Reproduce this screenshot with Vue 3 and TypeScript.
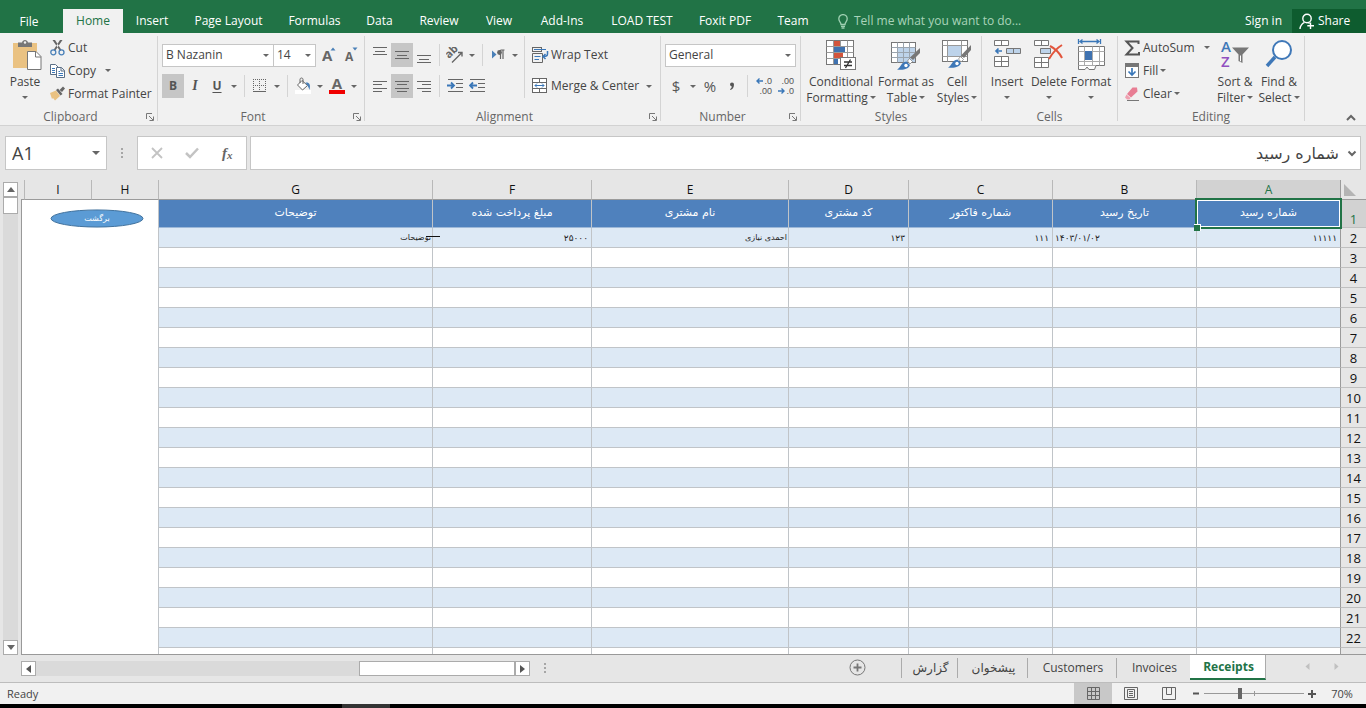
<script setup lang="ts">
import { ref } from 'vue'

interface RibbonTab { name: string; width: number }
interface Column { letter: string; title: string; value: string; align: string; cls: string }

const ribbonTabs: RibbonTab[] = [
  { name: 'Home', width: 60 },
  { name: 'Insert', width: 58 },
  { name: 'Page Layout', width: 95 },
  { name: 'Formulas', width: 77 },
  { name: 'Data', width: 53 },
  { name: 'Review', width: 66 },
  { name: 'View', width: 54 },
  { name: 'Add-Ins', width: 72 },
  { name: 'LOAD TEST', width: 88 },
  { name: 'Foxit PDF', width: 78 },
  { name: 'Team', width: 58 },
]
const activeTab = ref('Home')

const columns: Column[] = [
  { letter: 'A', title: 'شماره رسید', value: '۱۱۱۱۱', align: 'end', cls: 'w-b' },
  { letter: 'B', title: 'تاریخ رسید', value: '۱۴۰۳/۰۱/۰۲', align: 'start', cls: 'w-b' },
  { letter: 'C', title: 'شماره فاکتور', value: '۱۱۱', align: 'end', cls: 'w-b' },
  { letter: 'D', title: 'کد مشتری', value: '۱۲۳', align: 'end', cls: 'w-d' },
  { letter: 'E', title: 'نام مشتری', value: 'احمدی نیازی', align: 'flush', cls: 'w-e' },
  { letter: 'F', title: 'مبلغ پرداخت شده', value: '۲۵۰۰۰', align: 'end', cls: 'w-f' },
  { letter: 'G', title: 'توضیحات', value: 'توضیحات', align: 'flush', cls: 'w-g' },
]
const lastNumbered = 22
const emptyRows = Array.from({ length: 21 }, (_, i) => i + 3)

const sheets = ['گزارش', 'پیشخوان', 'Customers', 'Invoices', 'Receipts']
const sheetWidths = [56, 70, 89, 74, 76]
const activeSheet = ref('Receipts')

const fontName = ref('B Nazanin')
const fontSize = ref('14')
const numberFormat = ref('General')
const nameBox = ref('A1')
const formula = ref('شماره رسید')
const zoom = ref(35)
</script>

<template>
  <div class="app">
    <header class="tabs">
      <button class="tab file">File</button>
      <button
        v-for="t in ribbonTabs"
        :key="t.name"
        class="tab"
        :class="{ active: t.name === activeTab }"
        :style="{ width: t.width + 'px' }"
        @click="activeTab = t.name"
      >{{ t.name }}</button>
      <button class="tell">
        <svg width="10" height="15" viewBox="0 0 10 15" fill="none" stroke="#9fd0b2" stroke-width="1.3">
          <path d="M3 10.500C3 8 .8 7.500.8 4.800A4.200 4.200 0 0 1 9.200 4.800C9.200 7.500 7 8 7 10.500ZM3 12.300H7M3.500 14H6.500" />
        </svg>
        Tell me what you want to do...
      </button>
      <button class="signin">Sign in</button>
      <button class="share">
        <svg width="16" height="17" viewBox="0 0 16 17" fill="none" stroke="#fff" stroke-width="1.400">
          <circle cx="8" cy="5.500" r="4.200" />
          <path d="M1 16C1.300 12.500 3 10.500 5.500 9.300M9.500 9.700L10.500 10.500M11.500 9.500V16M8.300 12.800H15" />
        </svg>
        Share
      </button>
    </header>

    <section class="ribbon">
      <div class="group g-clip">
        <div class="body">
          <button class="big paste">
            <svg width="29" height="32" viewBox="0 0 29 32">
              <rect x="0" y="4" width="24" height="25" fill="#eac282" />
              <path d="M5 8V3.500H9C9.500 0 14.500 0 15 3.500H19V8Z" fill="#777" />
              <circle cx="12" cy="3.500" r="1.200" fill="#f1f1f1" />
              <path d="M14.500 12.500H23L28 17.500V30.500H14.500Z" fill="#fff" stroke="#777" />
              <path d="M22.500 12.500V18H28" fill="none" stroke="#777" />
            </svg>
            <span>Paste</span>
            <i class="caret"></i>
          </button>
          <div class="stack">
            <button class="item">
              <svg width="16" height="16" viewBox="0 0 16 16" fill="none">
                <path d="M2.500 0L5 0L11.500 10L10 11ZM12.500 0L10 0L3.500 10L5 11Z" fill="#666" />
                <circle cx="3.300" cy="12.300" r="2.500" stroke="#4a80b8" stroke-width="1.300" />
                <circle cx="11.500" cy="12.300" r="2.500" stroke="#4a80b8" stroke-width="1.300" />
              </svg>Cut
            </button>
            <button class="item">
              <svg width="16" height="16" viewBox="0 0 16 16" fill="#fff" stroke="#5b6f86">
                <path d="M.5 1.500H5.500L8.500 4.500V11.500H.5Z" /><path d="M2 5.500H5M2 7.500H5M2 9.500H5" stroke="#3a77b8" />
                <path d="M6.500 4.500H11.500L14.500 7.500V14.500H6.500ZM11 4.500V8H14.500" /><path d="M8.500 8.500H10M8.500 10.500H13M8.500 12.500H13" stroke="#3a77b8" />
              </svg>Copy<i class="caret far"></i>
            </button>
            <button class="item">
              <svg width="16" height="16" viewBox="0 0 16 16">
                <path d="M0 7L6 4.500L10 10L5 14.500L3 12L2 13Z" fill="#eac282" />
                <path d="M6 4L8 2.500L12.500 8L10.500 9.500Z" fill="#666" />
                <path d="M9.500 4L13 0.500L15 2.500L12 6Z" fill="#666" />
              </svg>Format Painter
            </button>
          </div>
        </div>
        <div class="caption">Clipboard</div>
        <button class="launch" aria-label="Clipboard settings"><svg width="8" height="8" viewBox="0 0 8 8" fill="none" stroke="#777"><path d="M.5 6V.5H6M3 3L7 7M7.500 3.500V7.500H3.500" /></svg></button>
      </div>

      <div class="group g-font">
        <div class="body rows">
          <div class="line">
            <span class="combo fname"><select v-model="fontName" aria-label="Font"><option>B Nazanin</option></select><i class="caret"></i></span>
            <span class="combo fsize"><select v-model="fontSize" aria-label="Font size"><option>14</option></select><i class="caret"></i></span>
            <button class="ic grow" aria-label="Increase font size"><svg width="15" height="18" viewBox="0 0 15 18"><text x="0" y="15" class="glyph g15">A</text><path d="M8.500 4.500L11 1.500L13.500 4.500Z" fill="#4a80b8" /></svg></button>
            <button class="ic" aria-label="Decrease font size"><svg width="15" height="18" viewBox="0 0 15 18"><text x="1" y="15" class="glyph g12">A</text><path d="M8.500 1.500H13.500L11 4.500Z" fill="#4a80b8" /></svg></button>
          </div>
          <div class="line">
            <button class="ic on"><b>B</b></button>
            <button class="ic"><b class="ital">I</b></button>
            <button class="ic"><b class="und">U</b></button>
            <button class="dd" aria-label="Underline options"><i class="caret"></i></button>
            <i class="sep"></i>
            <button class="ic" aria-label="Borders"><svg width="14" height="14" viewBox="0 0 14 14" fill="none" stroke="#666"><path d="M.5 0V13M6.500 0V13M12.500 0V13M0 .5H13M0 6.500H13" stroke-dasharray="1 1" /><path d="M0 12.500H13" /></svg></button>
            <button class="dd" aria-label="Border options"><i class="caret"></i></button>
            <i class="sep"></i>
            <button class="ic" aria-label="Fill color"><svg width="17" height="18" viewBox="0 0 17 18"><rect y="13" width="16" height="4" fill="#fff" /><path d="M7 3.500L12.500 8.500L7.500 13L2.500 8Z" fill="#fff" stroke="#666" /><path d="M5 6V2.500C5 .5 8 .5 8 2.500V7" fill="none" stroke="#666" /><path d="M10.500 5.500C14 5 16 7 14.500 13C14 11 13 10 12.500 8.500Z" fill="#4a80b8" /></svg></button>
            <button class="dd" aria-label="Fill color options"><i class="caret"></i></button>
            <button class="ic" aria-label="Font color"><svg width="16" height="18" viewBox="0 0 16 18"><text x="8" y="12" text-anchor="middle" class="glyph g15">A</text><rect y="13" width="16" height="4" fill="#f00000" /></svg></button>
            <button class="dd" aria-label="Font color options"><i class="caret"></i></button>
          </div>
        </div>
        <div class="caption">Font</div>
        <button class="launch" aria-label="Font settings"><svg width="8" height="8" viewBox="0 0 8 8" fill="none" stroke="#777"><path d="M.5 6V.5H6M3 3L7 7M7.500 3.500V7.500H3.500" /></svg></button>
      </div>

      <div class="group g-align">
        <div class="body">
          <div class="rows alignleft">
            <div class="line">
              <button class="ic" aria-label="Top align"><svg width="14" height="16" viewBox="0 0 14 16" stroke="#666"><path d="M0 .5H14M2 4.500H12M0 7.500H14" /></svg></button>
              <button class="ic on" aria-label="Middle align"><svg width="14" height="16" viewBox="0 0 14 16" stroke="#666"><path d="M0 4.500H14M2 8.500H12M0 11.500H14" /></svg></button>
              <button class="ic" aria-label="Bottom align"><svg width="14" height="16" viewBox="0 0 14 16" stroke="#666"><path d="M0 8.500H14M2 12.500H12M0 15.500H14" /></svg></button>
              <i class="sep"></i>
              <button class="ic" aria-label="Orientation"><svg width="18" height="17" viewBox="0 0 18 17" fill="none"><text x="3" y="12" transform="rotate(-45 3 12)" class="glyph g11">ab</text><path d="M6 15.500L15.500 6M12 5.500H16V9.500" stroke="#666" stroke-width="1.400" /></svg></button>
              <button class="dd" aria-label="Orientation options"><i class="caret"></i></button>
              <i class="sep"></i>
              <button class="ic" aria-label="Text direction"><svg width="14" height="12" viewBox="0 0 14 12"><path d="M1 1.500L5.500 5.500L1 9.500Z" fill="#4a80b8" /><path d="M9.500 1H13.500M9.500 1V10M12 1V10" stroke="#666" stroke-width="1.200" /><circle cx="8.500" cy="3.500" r="2.400" fill="#666" /></svg></button>
              <button class="dd" aria-label="Text direction options"><i class="caret"></i></button>
            </div>
            <div class="line">
              <button class="ic" aria-label="Align left"><svg width="14" height="13" viewBox="0 0 14 13" stroke="#666"><path d="M0 1.500H14M0 4.500H9M0 8.500H14M0 11.500H9" /></svg></button>
              <button class="ic on" aria-label="Center"><svg width="14" height="13" viewBox="0 0 14 13" stroke="#666"><path d="M0 1.500H14M2 4.500H12M0 8.500H14M2 11.500H12" /></svg></button>
              <button class="ic" aria-label="Align right"><svg width="14" height="13" viewBox="0 0 14 13" stroke="#666"><path d="M0 1.500H14M5 4.500H14M0 8.500H14M5 11.500H14" /></svg></button>
              <i class="sep"></i>
              <button class="ic" aria-label="Increase indent"><svg width="17" height="14" viewBox="0 0 17 14" fill="none"><path d="M1 .5H16M9 4.500H16M9 8.500H16M1 12.500H16" stroke="#666" /><path d="M0 6.500H6.500M4 3.500L7 6.500L4 9.500" stroke="#3a77b8" stroke-width="1.800" /></svg></button>
              <button class="ic" aria-label="Decrease indent"><svg width="17" height="14" viewBox="0 0 17 14" fill="none"><path d="M1 .5H16M9 4.500H16M9 8.500H16M1 12.500H16" stroke="#666" /><path d="M8 6.500H1.500M4 3.500L1 6.500L4 9.500" stroke="#3a77b8" stroke-width="1.800" /></svg></button>
            </div>
          </div>
          <div class="rows alignright">
            <button class="item"><svg width="17" height="16" viewBox="0 0 17 16" fill="none" stroke="#666"><rect x=".5" y=".5" width="9" height="4" /><path d="M2 2.500H14" stroke="#3a77b8" /><path d="M.5 6.500H10.500V15.500H.5Z" /><path d="M2.500 9.500H8.500M2.500 12.500H7" stroke="#3a77b8" /><path d="M15.500 4V7C15.500 8.500 15 9.500 11.500 9.500M13.500 7L11 9.500L13.500 12" stroke="#3a77b8" stroke-width="1.500" /></svg>Wrap Text</button>
            <button class="item"><svg width="17" height="16" viewBox="0 0 17 16" fill="none" stroke="#666"><rect x=".5" y=".5" width="14" height="14" fill="#fff" /><path d="M.5 4.500H14.500M.5 10.500H14.500M7.500 .5V4.500M7.500 10.500V14.500" /><path d="M3 7.500H12M5 5.500L3 7.500L5 9.500M10 5.500L12 7.500L10 9.500" stroke="#3a77b8" /></svg>Merge &amp; Center<i class="caret mid"></i></button>
          </div>
        </div>
        <div class="caption">Alignment</div>
        <button class="launch" aria-label="Alignment settings"><svg width="8" height="8" viewBox="0 0 8 8" fill="none" stroke="#777"><path d="M.5 6V.5H6M3 3L7 7M7.500 3.500V7.500H3.500" /></svg></button>
      </div>

      <div class="group g-num">
        <div class="body rows">
          <div class="line"><span class="combo nfmt"><select v-model="numberFormat" aria-label="Number format"><option>General</option></select><i class="caret"></i></span></div>
          <div class="line">
            <button class="ic sym">$</button>
            <button class="dd" aria-label="Currency options"><i class="caret"></i></button>
            <button class="ic sym">%</button>
            <button class="ic" aria-label="Comma style"><svg width="6" height="9" viewBox="0 0 6 9"><path d="M1 2.500A2 2 0 0 1 5 2.500C5 5.500 3.500 7.500 1.500 8L1 7C2 6.500 2.800 5.500 2.800 4.400A2 2 0 0 1 1 2.500Z" fill="#555" /></svg></button>
            <i class="sep"></i>
            <button class="ic dec"><span><svg width="7" height="6" viewBox="0 0 7 6" fill="none" stroke="#3a77b8" stroke-width="1.400"><path d="M7 3H1M3.500 .5L1 3L3.500 5.500" /></svg>.0</span><span>.00</span></button>
            <button class="ic dec"><span>.00</span><span><svg width="7" height="6" viewBox="0 0 7 6" fill="none" stroke="#3a77b8" stroke-width="1.400"><path d="M0 3H6M3.500 .5L6 3L3.500 5.500" /></svg>.0</span></button>
          </div>
        </div>
        <div class="caption">Number</div>
        <button class="launch" aria-label="Number settings"><svg width="8" height="8" viewBox="0 0 8 8" fill="none" stroke="#777"><path d="M.5 6V.5H6M3 3L7 7M7.500 3.500V7.500H3.500" /></svg></button>
      </div>

      <div class="group g-styles">
        <div class="body">
          <button class="big cond">
            <svg width="30" height="32" viewBox="0 0 30 32">
              <rect x=".5" y="1.500" width="27" height="24" fill="#fff" stroke="#777" />
              <path d="M.5 7.500H27.500M.5 13.500H27.500M.5 19.500H27.500M7.500 1.500V25.500M14.500 1.500V25.500M21.500 1.500V25.500" stroke="#999" />
              <path d="M8 2H14V7H8ZM8 14H17V19H8Z" fill="#d2553c" /><path d="M8 8H19V13H8ZM8 20H12V25H8Z" fill="#3f72b0" />
              <rect x="14.500" y="18.500" width="15" height="12" fill="#fff" stroke="#777" />
              <path d="M18 23H26M18 26.500H26M24.500 20.500L19.500 29" stroke="#333" stroke-width="1.300" />
            </svg>
            <span>Conditional</span><span>Formatting<i class="caret"></i></span>
          </button>
          <button class="big fmt">
            <svg width="30" height="32" viewBox="0 0 30 32">
              <rect x=".5" y="3.500" width="24" height="20" fill="#fff" stroke="#777" />
              <rect x="7" y="9" width="17" height="14" fill="#bdd3ea" />
              <path d="M.5 8.500H24.500M.5 13.500H24.500M.5 18.500H24.500M6.500 3.500V23.500M12.500 3.500V23.500M18.500 3.500V23.500" stroke="#9aa4ae" />
              <path d="M29 9V14L22 21L19 18.500Z" fill="#777" /><path d="M18.500 19.500L21.500 22.500L19 25L16.500 22Z" fill="#fff" stroke="#777" stroke-width=".7" />
              <path d="M15.500 22.500L19 26C18 30 12 31.500 6 30.500C9.500 29 10 23 15.500 22.500Z" fill="#3f78b8" /><circle cx="15" cy="26.500" r="1.700" fill="#fff" />
            </svg>
            <span>Format as</span><span>Table<i class="caret"></i></span>
          </button>
          <button class="big cell">
            <svg width="30" height="32" viewBox="0 0 30 32">
              <rect x=".5" y="1.500" width="25" height="21" fill="#fff" stroke="#777" />
              <path d="M.5 6.500H25.500M.5 17.500H25.500M5.500 1.500V22.500M19.500 1.500V22.500" stroke="#999" />
              <rect x="6" y="7" width="13" height="10" fill="#bdd3ea" />
              <path d="M29 6V11L22 19L19 16.500Z" fill="#777" /><path d="M18.500 17.500L21.500 20.500L19 23L16.500 20Z" fill="#fff" stroke="#777" stroke-width=".7" />
              <path d="M15.500 20.500L19 24C18 28 12 29.500 6 28.500C9.500 27 10 21 15.500 20.500Z" fill="#3f78b8" /><circle cx="15" cy="24.500" r="1.700" fill="#fff" />
            </svg>
            <span>Cell</span><span>Styles<i class="caret"></i></span>
          </button>
        </div>
        <div class="caption">Styles</div>
      </div>

      <div class="group g-cells">
        <div class="body">
          <button class="big c42">
            <svg width="27" height="32" viewBox="0 0 27 32" fill="#fff" stroke="#777">
              <path d="M.5 1.500H14.500V6.500H.5ZM7.500 1.500V6.500M.5 17.500H14.500V27.500H.5ZM7.500 17.500V27.500M.5 22.500H14.500" />
              <path d="M12.500 9.500H26.500V14.500H12.500ZM19.500 9.500V14.500" fill="#bdd3ea" />
              <path d="M8 12H2M4.500 9.500L2 12L4.500 14.500" fill="none" stroke="#3a77b8" stroke-width="1.700" />
            </svg>
            <span>Insert</span><i class="caret"></i>
          </button>
          <button class="big c42">
            <svg width="30" height="32" viewBox="0 0 30 32" fill="#fff" stroke="#777">
              <path d="M.5 1.500H14.500V6.500H.5ZM7.500 1.500V6.500M.5 18.500H14.500V28.500H.5ZM7.500 18.500V28.500M.5 23.500H14.500" />
              <path d="M6.500 9.500H16.500V14.500H6.500Z" fill="#bdd3ea" />
              <path d="M16 7C20 9 25 13 28 19M28 6C23 9 19 13 15 20" fill="none" stroke="#e2553c" stroke-width="2" />
            </svg>
            <span>Delete</span><i class="caret"></i>
          </button>
          <button class="big c42">
            <svg width="29" height="32" viewBox="0 0 29 32">
              <path d="M1.500 0V5M23.500 0V5M3 2.500H22M5.500 .5L3 2.500L5.500 4.500M19.500 .5L22 2.500L19.500 4.500" fill="none" stroke="#3a77b8" stroke-width="1.300" />
              <path d="M1.500 7.500H27.500V26.500H19L17.500 30.500H12L10 28L8 30.500H1.500Z" fill="#fff" stroke="#777" />
              <path d="M1.500 12.500H27.500M1.500 22.500H27.500M7.500 7.500V26M15.500 7.500V26M22.500 7.500V26.500M1.500 26.500H19" stroke="#aaa" />
              <rect x="8" y="12" width="7" height="9" fill="#3f72b0" />
            </svg>
            <span>Format</span><i class="caret"></i>
          </button>
        </div>
        <div class="caption">Cells</div>
      </div>

      <div class="group g-edit">
        <div class="body">
          <div class="stack edit">
            <button class="item"><svg width="17" height="16" viewBox="0 0 17 16"><path d="M14.500 4V1.500H2.500L8.500 8L2.500 14.500H15V12" fill="none" stroke="#555" stroke-width="2" /></svg>AutoSum<i class="caret far"></i></button>
            <button class="item"><svg width="17" height="16" viewBox="0 0 17 16"><rect x="1.500" y=".5" width="13" height="14" fill="#fff" stroke="#777" /><rect x="1" y="0" width="14" height="4" fill="#777" /><path d="M8 5V12M4.500 8.500L8 12L11.500 8.500" fill="none" stroke="#3a77b8" stroke-width="1.700" /></svg>Fill<i class="caret near"></i></button>
            <button class="item"><svg width="17" height="16" viewBox="0 0 17 16"><path d="M8.500 1.500H13L13.500 5.500L7 11.500L3 8Z" fill="#e87e94" /><path d="M2.500 8.500L6.500 12L5.500 13.500H3L1 11.500Z" fill="#f0a0b0" /><path d="M3 14.500H15" stroke="#777" /></svg>Clear<i class="caret near"></i></button>
          </div>
          <button class="big c44">
            <svg width="30" height="32" viewBox="0 0 30 32" fill="none">
              <text x="1" y="13" class="glyph az blue">A</text>
              <text x="1" y="28" class="glyph az violet">Z</text>
              <path d="M12 8.500H29L22.500 15.500V24L18.500 22V15.500Z" fill="#777" /><path d="M20 16.500V22L21 22.500V16.500Z" fill="#fff" />
            </svg>
            <span>Sort &amp;</span><span>Filter<i class="caret"></i></span>
          </button>
          <button class="big c44">
            <svg width="28" height="32" viewBox="0 0 28 32" fill="none"><path d="M10 18L2 27" stroke="#3f78b8" stroke-width="3.500" /><circle cx="17" cy="11" r="9" fill="#fff" stroke="#3f78b8" stroke-width="2" /></svg>
            <span>Find &amp;</span><span>Select<i class="caret"></i></span>
          </button>
        </div>
        <div class="caption">Editing</div>
      </div>
      <button class="collapse" aria-label="Collapse the ribbon"><svg width="10" height="7" viewBox="0 0 10 7" fill="none" stroke="#666" stroke-width="2"><path d="M1 6L5 2L9 6" /></svg></button>
    </section>

    <section class="fbar">
      <span class="namebox"><input v-model="nameBox" aria-label="Name box" /><i class="caret"></i></span>
      <i class="dots"></i>
      <div class="fbtns">
        <button aria-label="Cancel"><svg width="12" height="12" viewBox="0 0 12 12" stroke="#c3c3c3" stroke-width="1.800"><path d="M1 1L11 11M11 1L1 11" /></svg></button>
        <button aria-label="Enter"><svg width="14" height="12" viewBox="0 0 14 12" fill="none" stroke="#c3c3c3" stroke-width="2.500"><path d="M1 6L5 10L13 1.500" /></svg></button>
        <button class="fx">f<small>x</small></button>
      </div>
      <div class="formula">
        <input v-model="formula" dir="rtl" aria-label="Formula" />
        <button aria-label="Expand formula bar"><svg width="10" height="7" viewBox="0 0 10 7" fill="none" stroke="#666" stroke-width="2"><path d="M1.500 1.500L5 5L8.500 1.500" /></svg></button>
      </div>
    </section>

    <main class="sheet">
      <div class="vscroll">
        <button class="sbtn" aria-label="Scroll up"><svg width="8" height="5" viewBox="0 0 8 5" fill="#666"><path d="M0 5L4 0L8 5Z" /></svg></button>
        <div class="vthumb"></div>
        <div class="vtrack"></div>
        <button class="sbtn" aria-label="Scroll down"><svg width="8" height="5" viewBox="0 0 8 5" fill="#666"><path d="M0 0L4 5L8 0Z" /></svg></button>
      </div>
      <div class="gridwrap">
        <table dir="rtl">
          <colgroup>
            <col class="w-row" />
            <col v-for="c in columns" :key="c.letter" :class="c.cls" />
            <col class="w-h" /><col class="w-h" /><col />
          </colgroup>
          <thead>
            <tr>
              <th class="corner"><svg width="12" height="12" viewBox="0 0 12 12"><path d="M0 0V12H12Z" fill="#b4b4b4" /></svg></th>
              <th v-for="c in columns" :key="c.letter" :class="{ sel: c.letter === 'A' }">{{ c.letter }}</th>
              <th>H</th><th>I</th><th class="rest"></th>
            </tr>
          </thead>
          <tbody>
            <tr>
              <th class="sel">1</th>
              <td v-for="c in columns" :key="c.letter" class="title">{{ c.title }}<span v-if="c.letter === 'A'" class="cursor"></span></td>
              <td class="plain"></td><td class="plain"></td><td class="plain"></td>
            </tr>
            <tr class="band">
              <th>2</th>
              <td v-for="c in columns" :key="c.letter" :class="[c.align, { strike: c.letter === 'G' }]">{{ c.value }}</td>
              <td class="plain"></td><td class="plain"></td><td class="plain"></td>
            </tr>
            <tr v-for="n in emptyRows" :key="n" :class="{ band: n % 2 === 0 }">
              <th>{{ n <= lastNumbered ? n : '' }}</th>
              <td v-for="c in columns" :key="c.letter"></td>
              <td class="plain"></td><td class="plain"></td><td class="plain"></td>
            </tr>
          </tbody>
        </table>
        <button class="back">
          <svg viewBox="0 0 94 20" preserveAspectRatio="none"><ellipse cx="47" cy="10" rx="46" ry="9" fill="#5b9bd5" stroke="#41719c" /></svg>
          <span>برگشت</span>
        </button>
      </div>
    </main>

    <nav class="sheetbar">
      <div class="hscroll">
        <button class="sbtn" aria-label="Scroll left"><svg width="5" height="8" viewBox="0 0 5 8" fill="#555"><path d="M5 0L0 4L5 8Z" /></svg></button>
        <div class="htrack"></div>
        <div class="hthumb"></div>
        <button class="sbtn" aria-label="Scroll right"><svg width="5" height="8" viewBox="0 0 5 8" fill="#555"><path d="M0 0L5 4L0 8Z" /></svg></button>
      </div>
      <i class="dots"></i>
      <button class="add" aria-label="New sheet"><svg width="17" height="17" viewBox="0 0 17 17" fill="none" stroke="#777"><circle cx="8.500" cy="8.500" r="7.500" /><path d="M8.500 4.500V12.500M4.500 8.500H12.500" stroke-width="1.800" /></svg></button>
      <button
        v-for="(s, i) in sheets"
        :key="s"
        class="stab"
        :class="{ active: s === activeSheet }"
        :style="{ width: sheetWidths[i] + 'px' }"
        @click="activeSheet = s"
      >{{ s }}</button>
      <div class="nav">
        <button aria-label="Previous sheet"><svg width="5" height="7" viewBox="0 0 5 7" fill="#c0c0c0"><path d="M4.500 0L.5 3.500L4.500 7Z" /></svg></button>
        <button aria-label="Next sheet"><svg width="5" height="7" viewBox="0 0 5 7" fill="#c0c0c0"><path d="M.5 0L4.500 3.500L.5 7Z" /></svg></button>
      </div>
    </nav>

    <footer class="status">
      <span class="ready">Ready</span>
      <button class="view on" aria-label="Normal view"><svg width="13" height="13" viewBox="0 0 13 13" fill="none" stroke="#666"><path d="M.5 .5H12.500V12.500H.5ZM.5 4.500H12.500M.5 8.500H12.500M4.500 .5V12.500M8.500 .5V12.500" /></svg></button>
      <button class="view" aria-label="Page layout view"><svg width="14" height="13" viewBox="0 0 14 13" fill="none" stroke="#666"><path d="M.5 .5H13.500V12.500H.5ZM3.500 2.500H10.500V10.500H3.500ZM5 4.500H9M5 6.500H9M5 8.500H9" /></svg></button>
      <button class="view" aria-label="Page break preview"><svg width="14" height="13" viewBox="0 0 14 13" fill="none" stroke="#666"><path d="M.5 .5H13.500V12.500H.5ZM4.500 .5V7.500H9.500V.5" /></svg></button>
      <button class="zb" aria-label="Zoom out"><svg width="6" height="7" viewBox="0 0 6 7"><path d="M0 3.500H6" stroke="#555" stroke-width="2" /></svg></button>
      <input v-model.number="zoom" class="zoom" type="range" min="0" max="100" aria-label="Zoom" />
      <button class="zb" aria-label="Zoom in"><svg width="8" height="8" viewBox="0 0 8 8"><path d="M0 4H8M4 0V8" stroke="#555" stroke-width="2" /></svg></button>
      <button class="pct">70%</button>
    </footer>
    <div class="strip"><i></i></div>
  </div>
</template>

<style>
body { margin: 0; overflow: hidden; }
</style>

<style scoped>
.app {
  display: flex;
  flex-direction: column;
  height: 100vh;
  background: #e6e6e6;
  color: #444;
  font-family: "Open Sans", "Noto Sans", "DejaVu Sans", sans-serif;
  font-size: 12px;
  line-height: 16px;
}
* { box-sizing: border-box; }
button, input, select {
  font: inherit;
  color: inherit;
  border: 0;
  padding: 0;
  margin: 0;
  background: none;
  border-radius: 0;
  white-space: nowrap;
}
svg { display: block; flex: none; }
.glyph { fill: #666; font-weight: bold; }
.g15 { font-size: 15px; }
.g12 { font-size: 12px; }
.g11 { font-size: 11px; }
.az { font-size: 15px; font-weight: 600; }
.blue { fill: #3f78b8; }
.violet { fill: #9150c0; }

.tabs { display: flex; align-items: flex-end; flex: none; height: 33px; background: #217346; color: #fff; }
.tab { flex: none; height: 24px; text-align: center; }
.tab.file { width: 58px; margin-right: 5px; padding-top: 1px; }
.tab.active { background: #f1f1f1; color: #217346; }
.tell { display: flex; align-items: center; gap: 6px; height: 24px; margin-left: 16px; color: #a9d3ba; }
.signin { height: 24px; margin-left: auto; padding-right: 10px; }
.share { display: flex; align-items: center; gap: 3px; width: 74px; height: 24px; padding-left: 7px; background: #0e5c2f; }

.ribbon { display: flex; flex: none; height: 93px; padding-top: 3px; background: #f1f1f1; border-bottom: 1px solid #d2d2d2; position: relative; }
.group { position: relative; flex: none; height: 85px; border-right: 1px solid #d4d4d4; }
.body { display: flex; height: 73px; }
.caption { text-align: center; color: #666; }
.launch { position: absolute; right: 3px; bottom: 0; }
.g-clip { width: 158px; }
.g-clip .body { padding-left: 5px; gap: 5px; }
.g-font { width: 207px; }
.g-clip .caption, .g-font .caption, .g-align .caption, .g-num .caption { padding-right: 16px; }
.g-font .body, .g-num .body, .g-align .body { padding-left: 4px; }
.g-align { width: 296px; }
.g-num { width: 140px; }
.g-styles { width: 181px; }
.g-styles .body { padding-left: 3px; }
.g-cells { width: 136px; }
.g-cells .body { padding-left: 4px; }
.g-edit { width: 187px; }
.g-edit .body { padding-left: 6px; }

.caret { display: inline-block; flex: none; border: 3px solid transparent; border-top-color: #666; border-bottom-width: 0; }
.item { display: flex; align-items: center; gap: 2px; height: 23px; }
.item .far { margin-left: 7px; }
.item .mid { margin-left: 5px; }
.item .near { margin-left: 0; }
.stack { display: flex; flex-direction: column; }
.edit { width: 89px; }
.big { display: flex; flex-direction: column; align-items: center; flex: none; padding-top: 3px; }
.big svg { margin-bottom: 3px; }
.big > .caret { margin-top: 6px; }
.big span { display: block; }
.big span .caret { margin: 0 0 3px 2px; }
.paste { width: 40px; }
.paste svg { margin-left: 4px; }
.cond { width: 74px; }
.fmt { width: 56px; }
.cell { width: 46px; }
.c42 { width: 42px; }
.c44 { width: 44px; }

.rows { display: flex; flex-direction: column; gap: 7px; padding-top: 7px; }
.line { display: flex; align-items: center; height: 24px; }
.ic { display: flex; align-items: center; justify-content: center; flex: none; width: 22px; height: 24px; color: #555; }
.ic.on { background: #c6c6c6; }
.grow { margin-left: 2px; }
.dd { display: flex; align-items: center; justify-content: center; width: 12px; height: 24px; }
.sep { flex: none; width: 1px; height: 22px; margin: 0 4px; background: #d4d4d4; }
.ital { font-family: "Liberation Serif", serif; font-style: italic; font-size: 14px; }
.und { text-decoration: underline; text-underline-offset: 2px; }
.sym { font-size: 15px; }
.dec { flex-direction: column; align-items: flex-end; font-family: "Liberation Sans", sans-serif; font-size: 9px; line-height: 10px; padding-right: 2px; }
.dec span { display: flex; align-items: center; gap: 1px; }
.combo { position: relative; height: 23px; border: 1px solid #c6c6c6; background: #fff; }
.combo select { width: 100%; height: 21px; padding-left: 3px; appearance: none; outline: 0; }
.combo .caret { position: absolute; right: 4px; top: 9px; }
.fname { width: 112px; }
.fsize { width: 43px; margin-left: -1px; }
.nfmt { width: 131px; }
.alignleft { width: 156px; border-right: 1px solid #d4d4d4; height: 62px; }
.alignright { padding-left: 7px; }
.alignright .item { height: 24px; }
.collapse { position: absolute; right: 10px; bottom: 4px; }

.fbar { display: flex; flex: none; height: 54px; padding: 10px 5px; color: #444; }
.namebox { position: relative; width: 102px; border: 1px solid #c6c6c6; background: #fff; }
.namebox input { width: 80px; height: 32px; padding-left: 6px; font-size: 18px; outline: 0; }
.namebox .caret { position: absolute; right: 6px; top: 14px; border-width: 4px 4px 0; }
.dots { flex: none; align-self: center; width: 2px; height: 11px; margin: 0 14px; background: repeating-linear-gradient(#a6a6a6 0 2px, transparent 2px 4px); }
.fbtns { display: flex; width: 110px; padding: 0 1px; border: 1px solid #c6c6c6; background: #fff; }
.fbtns button { display: flex; flex: 1; align-items: center; justify-content: center; }
.fbtns .fx { font-family: "Liberation Serif", serif; font-style: italic; font-weight: bold; font-size: 15px; color: #666; }
.fx small { font-size: 11px; padding-top: 3px; }
.formula { display: flex; flex: 1; margin-left: 3px; border: 1px solid #c6c6c6; background: #fff; min-width: 0; }
.formula input { flex: 1; min-width: 0; font-family: "DejaVu Sans", sans-serif; font-size: 16px; outline: 0; }
.formula button { display: flex; align-items: center; justify-content: center; width: 16px; margin-left: 5px; }

.sheet { display: flex; flex: 1; min-height: 0; }
.vscroll { display: flex; flex-direction: column; flex: none; width: 21px; padding: 2px 3px 0; }
.sbtn { display: flex; align-items: center; justify-content: center; flex: none; width: 15px; height: 15px; border: 1px solid #ababab; background: #fff; }
.vthumb { flex: none; width: 15px; height: 17px; border: 1px solid #ababab; background: #fff; }
.vtrack { flex: 1; width: 15px; background: #dadada; }
.gridwrap { position: relative; flex: 1; min-width: 0; overflow: hidden; border-bottom: 1px solid #999; }
table { width: 100%; table-layout: fixed; border-collapse: separate; border-spacing: 0; background: #fff; }
.w-row { width: 26px; }
.w-b { width: 144px; }
.w-d { width: 120px; }
.w-e { width: 197px; }
.w-f { width: 159px; }
.w-g { width: 274px; }
.w-h { width: 67px; }
th { padding: 0; font-weight: normal; color: #111; background: #e6e6e6; line-height: 16px; }
thead th { height: 20px; padding-top: 1px; border-bottom: 1px solid #9b9b9b; border-left: 1px solid #b8b8b8; }
thead .corner { border-left-color: #9b9b9b; }
.corner svg { margin-right: 10px; }
thead .rest { border-left: 0; }
thead .sel { background: #d2d2d2; color: #217346; }
tbody th { height: 20px; padding-top: 1px; border-left: 1px solid #9b9b9b; border-bottom: 1px solid #c0c0c0; font-size: 13px; }
tbody .sel { background: #d2d2d2; color: #217346; vertical-align: bottom; height: 28px; }
td { position: relative; padding: 0; border-left: 1px solid #c0c4c8; border-bottom: 1px solid #c0c4c8; font-family: "DejaVu Sans", sans-serif; font-size: 8px; line-height: 12px; color: #222; white-space: nowrap; }
.band td { background: #dde9f5; }
.title { background: #4f81bd; color: #fff; border-bottom-color: #9db8d8; font-size: 11px; line-height: 14px; text-align: center; vertical-align: top; padding-top: 6px; }
td.plain, .band td.plain { border: 0; background: #fff; }
td.plain:last-child { border-left: 1px solid #999; }
.end { text-align: right; padding-right: 3px; font-size: 9px; }
.start { text-align: left; padding-left: 2px; font-size: 9px; }
.flush { text-align: right; padding-right: 1px; }
.strike::before { content: ""; position: absolute; right: -8px; top: 8px; width: 14px; height: 1px; background: #111; z-index: 1; }
.cursor { position: absolute; inset: -2px -2px -2px -2px; border: 2px solid #217346; z-index: 1; }
.cursor::before { content: ""; position: absolute; inset: 0; border: 1px solid #fff; }
.cursor::after { content: ""; position: absolute; left: -3px; bottom: -4px; width: 6px; height: 6px; background: #217346; border: 1px solid #fff; border-width: 1px 1px 0 0; }
.back { position: absolute; left: 29px; top: 29px; width: 94px; height: 19px; color: #fff; font-family: "DejaVu Sans", sans-serif; font-size: 8px; }
.back svg { position: absolute; inset: 0; width: 100%; height: 100%; }
.back span { position: relative; }

.sheetbar { display: flex; flex: none; height: 28px; border-bottom: 1px solid #bdbdbd; }
.hscroll { display: flex; flex: 0 1 530px; padding: 6px 0 0 21px; }
.htrack { flex: 1; height: 15px; background: #dadada; }
.hthumb { flex: none; width: 156px; height: 15px; border: 1px solid #ababab; background: #fff; }
.add { margin-left: auto; padding-right: 35px; height: 25px; }
.stab { flex: none; height: 20px; margin-top: 3px; border-left: 1px solid #ababab; padding-left: 2px; }
.stab.active { height: 25px; margin-top: 0; background: #fff; color: #217346; font-weight: bold; border: 0; border-right: 1px solid #ababab; border-bottom: 2px solid #217346; }
.nav { display: flex; gap: 24px; width: 100px; padding: 0 27px 4px 39px; }

.status { display: flex; flex: none; align-items: center; height: 21px; background: #f1f1f1; font-size: 11px; }
.ready { margin: 0 auto 0 7px; }
.view { display: flex; align-items: center; justify-content: center; width: 38px; height: 21px; }
.view.on { background: #c8c8c8; }
.zb { display: flex; align-items: center; justify-content: center; width: 16px; height: 21px; }
.zoom { width: 100px; height: 21px; appearance: none; outline: 0; background: linear-gradient(#999, #999) center / 100% 1px no-repeat, linear-gradient(#999, #999) center / 1px 5px no-repeat; }
.zoom::-webkit-slider-thumb { appearance: none; width: 4px; height: 11px; background: #666; }
.pct { width: 46px; text-align: center; padding-right: 2px; }
.strip { flex: none; height: 4px; background: #000; }
.strip i { display: block; width: 48px; height: 4px; margin-left: 25%; background: #333; }
</style>
